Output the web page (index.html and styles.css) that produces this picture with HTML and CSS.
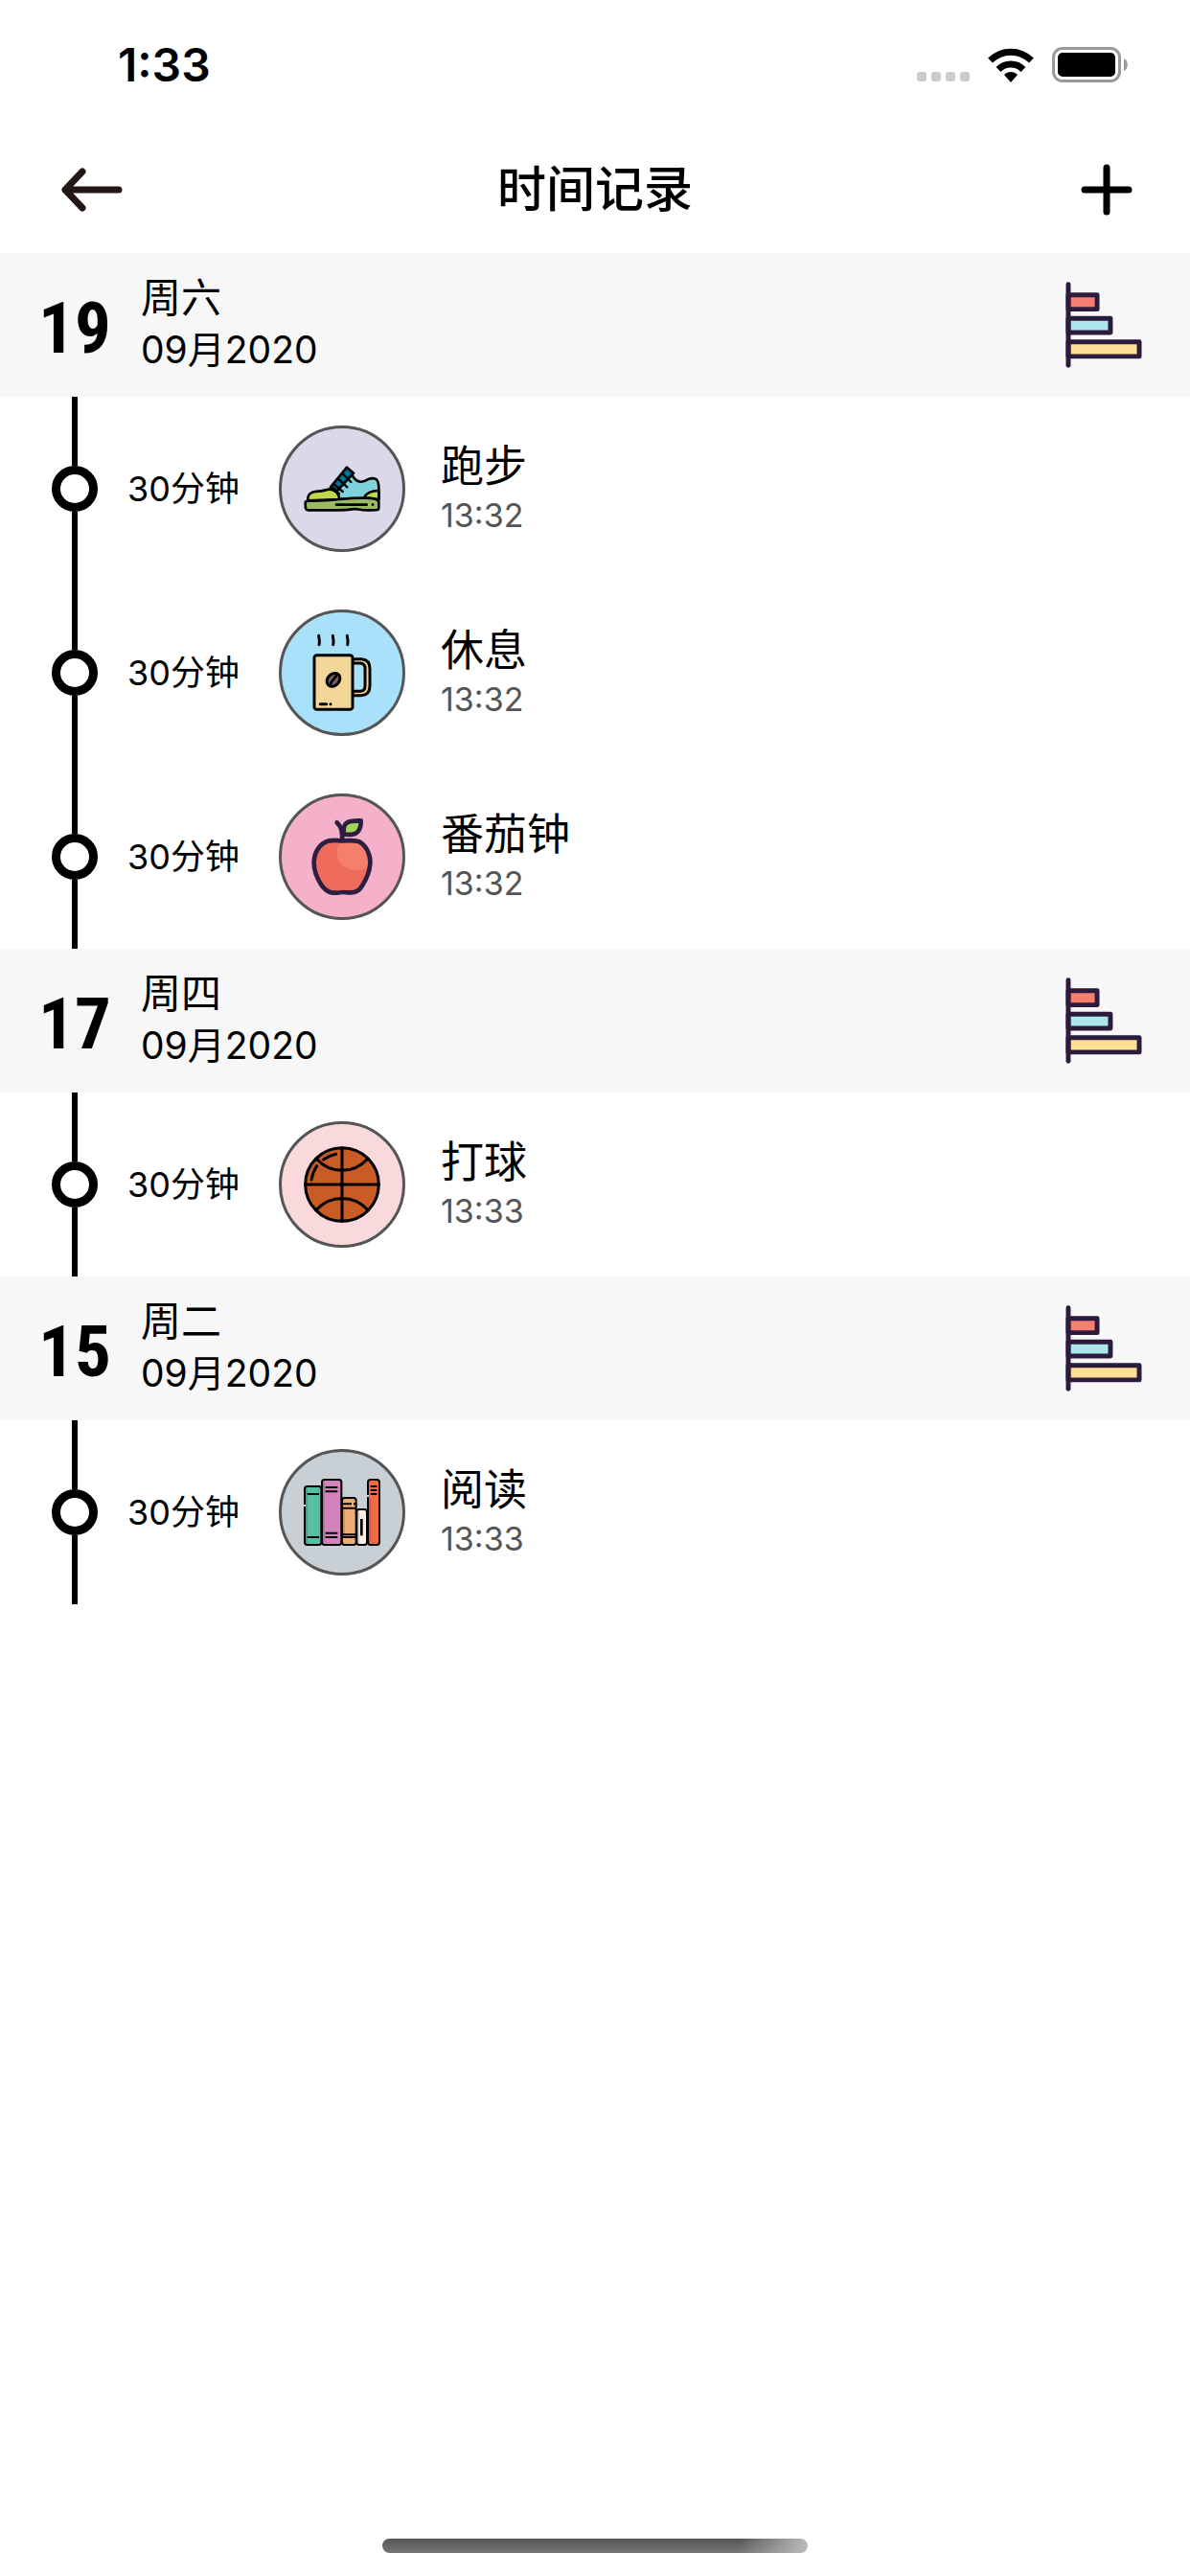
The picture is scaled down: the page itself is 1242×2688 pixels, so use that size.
FILE: index.html
```html
<!DOCTYPE html>
<html lang="zh-CN">
<head>
<meta charset="utf-8">
<meta name="viewport" content="width=device-width, initial-scale=1">
<title>时间记录</title>
<link rel="stylesheet" href="styles.css">
</head>
<body>
<svg class="defs" aria-hidden="true">
  <symbol id="chart" viewBox="65 71 242 271">
    <g stroke="#2b1c3e" stroke-width="15" stroke-linejoin="round" stroke-linecap="round">
      <path fill="#f77f70" d="M74 112h91v45H74z"/>
      <path fill="#aee6ee" d="M74 186h133v45H74z"/>
      <path fill="#ffdf94" d="M74 260h224v46H74z"/>
      <path d="M74 79v255"/>
    </g>
  </symbol>
</svg>
<div class="app">
  <div class="status">
    <span class="clock">1:33</span>
    <div class="indicators">
      <svg class="signal" viewBox="0 0 55 10" fill="#ccc" aria-hidden="true"><rect width="10" height="10" rx="3"/><rect x="15" width="10" height="10" rx="3"/><rect x="30" width="10" height="10" rx="3"/><rect x="45" width="10" height="10" rx="3"/></svg>
      <svg class="wifi" viewBox="0 0 48 36" aria-hidden="true"><path d="M24 36l-7-8c4-4 10-4 14 0z"/><path fill="none" stroke="#000" stroke-width="7" d="M11 22.500c7.500-7.300 18.500-7.300 26 0M2.500 13c12.500-11.800 30.500-11.800 43 0"/></svg>
      <svg class="battery" viewBox="0 0 79 37" aria-hidden="true"><rect x="1.500" y="1.500" width="69" height="34" rx="9.500" fill="none" stroke="#999" stroke-width="3"/><rect x="6" y="6" width="60" height="25" rx="5"/><path fill="#999" d="M75 12c5 2 5 11 0 13z"/></svg>
    </div>
  </div>
  <header class="nav">
    <button class="icon-button" type="button" aria-label="返回"><svg class="back" viewBox="-4 0 68 46" fill="none" stroke="#231815" stroke-width="7" stroke-linecap="round" stroke-linejoin="round" aria-hidden="true"><path d="M60 23H4M22 4L4 23l18 19"/></svg></button>
    <h1 class="title">时间记录</h1>
    <button class="icon-button icon-button-end" type="button" aria-label="添加"><svg class="add" viewBox="0 0 54 54" fill="none" stroke="#000" stroke-width="7" stroke-linecap="round" aria-hidden="true"><path d="M4 27h46M27 4v46"/></svg></button>
  </header>
  <main>
    <section>
      <div class="day">
        <span class="day-number">19</span>
        <h2 class="date"><span class="weekday">周六</span><span class="month">09月2020</span></h2>
        <button class="chart-button" type="button" aria-label="统计"><svg class="chart" aria-hidden="true"><use href="#chart"/></svg></button>
      </div>
      <ul class="records">
        <li class="record">
          <span class="rail"><span class="node"></span></span>
          <span class="duration">30分钟</span>
          <span class="badge run"><svg viewBox="42 51 378 378" stroke="#000" stroke-width="8" stroke-linejoin="round" stroke-linecap="round" aria-hidden="true">
            <path fill="#7ed1dd" d="M196 243L262 196C277 226 299 220 313 210C338 202 345 212 346 235V275L220 272z"/>
            <path fill="#c0d94b" d="M124 277C122 254 137 249 158 248C175 247 184 241 192 242C212 242 222 258 222 273z"/>
            <path fill="#c0d94b" d="M300 269C307 250 325 246 346 246V273z"/>
            <path fill="#007497" d="M195 235L246 173L267 191L213 249C209 243 203 240 195 242z"/>
            <path fill="none" stroke-width="7" d="M208 228l25 21M221 211l26 24M235 195l24 24M204 238l18 18"/>
            <path fill="#9abb63" d="M116 284C116 277 121 279 145 278C210 277 245 268 300 269C328 269 346 273 346 282V299C346 307 341 307 318 307C276 308 282 299 255 305C241 308 210 307 125 307C117 307 116 302 116 284z"/>
            <path fill="none" d="M213 290h95M327 289v1"/>
          </svg></span>
          <div class="info"><h3 class="name">跑步</h3><time class="time">13:32</time></div>
        </li>
        <li class="record">
          <span class="rail"><span class="node"></span></span>
          <span class="duration">30分钟</span>
          <span class="badge rest"><svg viewBox="42 57 378 378" stroke="#000" stroke-width="9" stroke-linejoin="round" stroke-linecap="round" aria-hidden="true">
            <path fill="#f2d798" d="M264 203H292Q318 205 318 233V288Q318 315 292 317H264V304H288Q303 303 303 288V232Q303 217 288 216H264z"/>
            <rect x="144" y="191" width="120" height="170" rx="8" fill="#f2d798"/>
            <ellipse cx="204" cy="268" rx="23" ry="18" transform="rotate(-45 204 268)" fill="#78606a"/>
            <path fill="none" stroke-width="8" d="M216 250C209 265 200 268 193 284"/>
            <path fill="none" d="M163 344h19M195 344v0.100M158 130c0 10 5 18 1 28M202 130c0 10 5 18 1 28M247 130c0 10 5 18 1 28"/>
          </svg></span>
          <div class="info"><h3 class="name">休息</h3><time class="time">13:32</time></div>
        </li>
        <li class="record">
          <span class="rail"><span class="node"></span></span>
          <span class="duration">30分钟</span>
          <span class="badge tomato"><svg viewBox="42 63 378 378" stroke="#2c1e3e" stroke-width="14" stroke-linejoin="round" stroke-linecap="round" aria-hidden="true">
            <path fill="#ee6b5e" stroke="none" d="M190 202C209 199 221 202 232 202C255 202 264 199 285 205C309 218 321 249 319 282C311 323 295 360 270 364C253 366 242 363 232 363C220 363 208 366 190 363C168 354 153 318 143 282C141 242 159 211 190 202z"/>
            <path fill="#f57e6c" stroke="none" d="M226 204C248 200 270 199 290 208C311 223 320 249 319 280C310 287 300 294 271 294C212 289 204 234 226 204z"/>
            <path fill="none" d="M190 202C209 199 221 202 232 202C255 202 264 199 285 205C309 218 321 249 319 275C317 298 306 324 295 341C287 354 279 364 260 364H246C236 362 225 363 215 365H201C185 362 175 353 166 340C152 318 143 298 143 272C143 240 159 211 190 202z"/>
            <path fill="#a0d65b" d="M236 182C235 159 238 150 246 146C256 138 270 139 290 139C290 153 289 165 281 173C271 185 254 183 236 182z"/>
            <path fill="none" d="M232 200C231 176 231 158 215 145"/>
          </svg></span>
          <div class="info"><h3 class="name">番茄钟</h3><time class="time">13:32</time></div>
        </li>
      </ul>
    </section>
    <section>
      <div class="day">
        <span class="day-number">17</span>
        <h2 class="date"><span class="weekday">周四</span><span class="month">09月2020</span></h2>
        <button class="chart-button" type="button" aria-label="统计"><svg class="chart" aria-hidden="true"><use href="#chart"/></svg></button>
      </div>
      <ul class="records">
        <li class="record">
          <span class="rail"><span class="node"></span></span>
          <span class="duration">30分钟</span>
          <span class="badge ball"><svg viewBox="42 54 378 378" fill="none" stroke="#000" stroke-width="9" stroke-linecap="round" aria-hidden="true">
            <circle cx="231" cy="243" r="115" fill="#c95b25"/>
            <path d="M231 128v230M116 243h230M151 163C195 211 267 211 311 163M151 322C195 275 267 275 311 322M173 165Q192 152 212 148M152 185Q139 204 135 228"/>
          </svg></span>
          <div class="info"><h3 class="name">打球</h3><time class="time">13:33</time></div>
        </li>
      </ul>
    </section>
    <section>
      <div class="day">
        <span class="day-number">15</span>
        <h2 class="date"><span class="weekday">周二</span><span class="month">09月2020</span></h2>
        <button class="chart-button" type="button" aria-label="统计"><svg class="chart" aria-hidden="true"><use href="#chart"/></svg></button>
      </div>
      <ul class="records">
        <li class="record">
          <span class="rail"><span class="node"></span></span>
          <span class="duration">30分钟</span>
          <span class="badge read"><svg viewBox="42 60 378 378" stroke="#000" stroke-width="6" aria-hidden="true">
            <rect x="114" y="168" width="52" height="183" rx="8" fill="#58bea2"/>
            <rect x="168" y="147" width="61" height="204" rx="8" fill="#d184bc"/>
            <rect x="231" y="204" width="44" height="147" rx="8" fill="#edae75"/>
            <rect x="277" y="240" width="32" height="111" rx="8" fill="#fdeee6"/>
            <rect x="312" y="147" width="36" height="204" rx="8" fill="#ef6b48"/>
            <path fill="none" stroke="#000" stroke-opacity=".15" d="M120 176v168M174 155v188M237 241v76M283 248v96M318 206v137"/>
            <path fill="none" d="M122 192h37M122 327h37M179 171h38M179 184h38M179 314h38M179 327h38M231 223h30M267 223h7M231 236h44M231 319h44M231 327h44M320 168h20M320 180h20M320 192h20"/>
            <path fill="none" stroke-width="8" d="M292 270v52"/>
            <path fill="none" stroke="#c8d0d6" d="M110 228h7M308 198h7"/>
          </svg></span>
          <div class="info"><h3 class="name">阅读</h3><time class="time">13:33</time></div>
        </li>
      </ul>
    </section>
  </main>
  <div class="home-indicator"></div>
</div>
</body>
</html>
```
FILE: styles.css
```css
* {
  box-sizing: border-box;
}

body,
h1,
h2,
h3,
ul {
  margin: 0;
  padding: 0;
  font-weight: 400;
}

body {
  background: #fff;
  color: #000;
  font-family: Inter, "Noto Sans CJK SC", sans-serif;
}

button {
  border: 0;
  padding: 0;
  background: none;
}

svg {
  display: block;
}

.defs {
  display: none;
}

.app {
  display: flex;
  flex-direction: column;
  min-height: 100vh;
}

.status {
  display: flex;
  justify-content: space-between;
  align-items: center;
  height: 132px;
  padding: 3px 65px 0 123px;
}

.clock {
  font-size: 48px;
  font-weight: 600;
  line-height: 60px;
}

.indicators {
  display: flex;
  align-items: flex-end;
  gap: 19px;
}

.signal {
  width: 55px;
  height: 10px;
  margin-bottom: 1px;
}

.wifi {
  width: 48px;
  height: 36px;
}

.battery {
  width: 79px;
  height: 37px;
}

.nav {
  display: grid;
  grid-template-columns: 1fr auto 1fr;
  align-items: center;
  height: 132px;
  padding: 0 60px;
}

.icon-button {
  display: flex;
  justify-self: start;
}

.icon-button-end {
  justify-self: end;
}

.back {
  width: 68px;
  height: 46px;
}

.add {
  width: 54px;
  height: 54px;
}

.title {
  font-size: 51px;
  font-weight: 500;
  line-height: 72px;
}

.day {
  display: flex;
  align-items: center;
  gap: 21px;
  height: 150px;
  padding: 0 50px 0 30px;
  background: #f7f7f7;
}

.day-number {
  width: 96px;
  padding-top: 6px;
  font-family: "Roboto Condensed", Roboto, sans-serif;
  font-size: 75px;
  font-weight: 700;
  line-height: 84px;
  text-align: center;
}

.date {
  display: flex;
  flex-direction: column;
  flex: 1;
  padding-bottom: 2px;
  line-height: 54px;
}

.weekday {
  font-size: 42px;
}

.month {
  font-size: 39px;
}

.chart {
  width: 80px;
  height: 90px;
}

.records {
  list-style: none;
}

.record {
  display: flex;
  align-items: center;
  height: 192px;
  padding-left: 54px;
}

.rail {
  display: flex;
  flex-direction: column;
  align-items: center;
  align-self: stretch;
  width: 48px;
  margin-right: 31px;
}

.rail::before,
.rail::after {
  content: "";
  flex: 1;
  width: 6px;
  background: #000;
}

.node {
  width: 48px;
  height: 48px;
  border: 9px solid #000;
  border-radius: 50%;
}

.duration {
  width: 158px;
  font-size: 36px;
  line-height: 48px;
}

.badge {
  width: 132px;
  height: 132px;
  margin-right: 37px;
  border: 3px solid #555;
  border-radius: 50%;
}

.run {
  background: #dad9e9;
}

.rest {
  background: #a9e1fb;
}

.tomato {
  background: #f6b1ca;
}

.ball {
  background: #f9d9db;
}

.read {
  background: #c8d0d6;
}

.info {
  padding-top: 2px;
}

.name {
  font-size: 45px;
  line-height: 54px;
}

.time {
  display: block;
  color: #555;
  font-size: 34px;
  line-height: 48px;
}

.home-indicator {
  width: 444px;
  height: 15px;
  margin: auto auto 24px;
  border-radius: 8px;
  background: linear-gradient(to right, transparent 84%, #bbb), linear-gradient(#555, #777);
}
```
